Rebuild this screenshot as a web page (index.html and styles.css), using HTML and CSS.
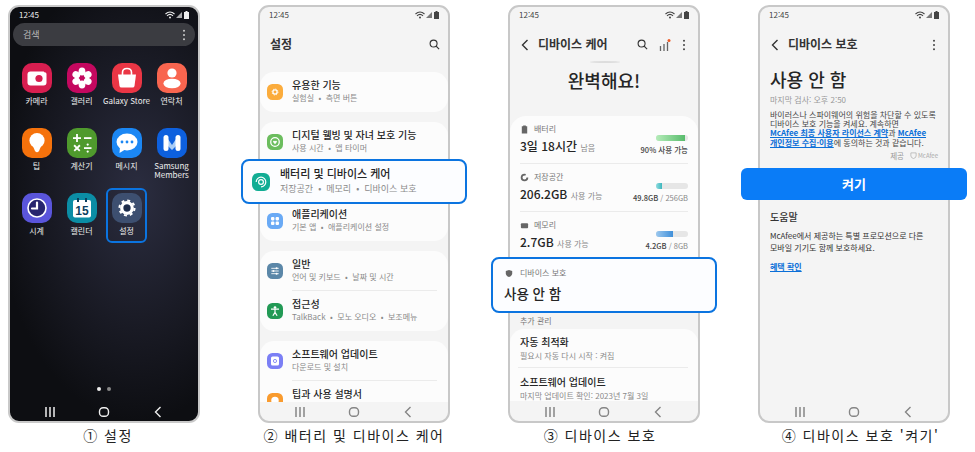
FILE: index.html
```html
<!DOCTYPE html>
<html lang="ko">
<head>
    <meta charset="UTF-8">
    <meta name="viewport" content="width=device-width, initial-scale=1.0">
    <title>디바이스 보호 켜기</title>
    <link rel="stylesheet" href="styles.css">
</head>
<body>
    <!-- 공용 아이콘 -->
    <svg class="sprite">
        <symbol id="i-wifi" viewBox="0 0 10 8"><path d="M0.5 3 Q5 -1 9.5 3 M2 4.8 Q5 2 8 4.8" fill="none" stroke="currentColor" stroke-width="1.1"/><circle cx="5" cy="6.6" r="1" fill="currentColor"/></symbol>
        <symbol id="i-signal" viewBox="0 0 7 8"><path d="M0 8 L7 1 V8 Z" fill="currentColor" opacity=".7"/></symbol>
        <symbol id="i-battery" viewBox="0 0 5 8"><path d="M1.5 0 H3.5 V1 H5 V8 H0 V1 H1.5 Z" fill="currentColor"/></symbol>
        <symbol id="i-recent" viewBox="0 0 14 14"><path d="M3 2 V12 M7 2 V12 M11 2 V12" fill="none" stroke="currentColor" stroke-width="1.5"/></symbol>
        <symbol id="i-home" viewBox="0 0 14 14"><rect x="2.5" y="2.7" width="9" height="8.6" rx="3.6" fill="none" stroke="currentColor" stroke-width="1.4"/></symbol>
        <symbol id="i-back" viewBox="0 0 14 14"><path d="M9.5 2 L4.5 7 L9.5 12" fill="none" stroke="currentColor" stroke-width="1.4"/></symbol>
        <symbol id="i-search" viewBox="0 0 12 12"><circle cx="5" cy="5" r="3.8" fill="none" stroke="currentColor" stroke-width="1.2"/><path d="M7.8 7.8 L11 11" stroke="currentColor" stroke-width="1.3"/></symbol>
        <symbol id="i-more" viewBox="0 0 4 12"><circle cx="2" cy="1.8" r="1" fill="currentColor"/><circle cx="2" cy="6" r="1" fill="currentColor"/><circle cx="2" cy="10.2" r="1" fill="currentColor"/></symbol>
        <symbol id="i-chevron" viewBox="0 0 8 12"><path d="M6.5 1 L1.5 6 L6.5 11" fill="none" stroke="currentColor" stroke-width="1.4"/></symbol>
        <symbol id="i-gear" viewBox="0 0 30 30"><circle cx="15" cy="15" r="6.6" fill="none" stroke="#fff" stroke-width="4"/><circle cx="15" cy="15" r="9.4" fill="none" stroke="#fff" stroke-width="2.6" stroke-dasharray="3.7 3.68"/></symbol>
    </svg>

    <main class="gallery">
        <!-- 1. 앱스 화면 -->
        <section class="step">
            <div class="phone phone-dark">
                <div class="status">
                    <span>12:45</span>
                    <span class="status-icons">
                        <svg class="ic-wifi"><use href="#i-wifi"/></svg>
                        <svg class="ic-signal"><use href="#i-signal"/></svg>
                        <svg class="ic-battery"><use href="#i-battery"/></svg>
                    </span>
                </div>
                <div class="search-bar">
                    <span>검색</span>
                    <svg class="ic-more"><use href="#i-more"/></svg>
                </div>
                <div class="app-grid">
                    <div class="app">
                        <svg class="app-icon" viewBox="0 0 30 30"><rect width="30" height="30" rx="10" fill="#d81e50"/><rect x="5.5" y="8.5" width="19" height="14" rx="3" fill="#fff"/><circle cx="17" cy="15.5" r="3.6" fill="#d81e50"/><circle cx="23.5" cy="8" r="1.6" fill="#d81e50"/></svg>
                        <span>카메라</span>
                    </div>
                    <div class="app">
                        <svg class="app-icon" viewBox="0 0 30 30"><rect width="30" height="30" rx="10" fill="#c4085f"/><g fill="#fff"><ellipse cx="15" cy="8.5" rx="3.4" ry="4"/><ellipse cx="15" cy="21.5" rx="3.4" ry="4"/><ellipse cx="9.3" cy="11.8" rx="3.4" ry="4" transform="rotate(-60 9.3 11.8)"/><ellipse cx="20.7" cy="11.8" rx="3.4" ry="4" transform="rotate(60 20.7 11.8)"/><ellipse cx="9.3" cy="18.2" rx="3.4" ry="4" transform="rotate(60 9.3 18.2)"/><ellipse cx="20.7" cy="18.2" rx="3.4" ry="4" transform="rotate(-60 20.7 18.2)"/></g><circle cx="15" cy="15" r="2" fill="#c4085f"/></svg>
                        <span>갤러리</span>
                    </div>
                    <div class="app">
                        <svg class="app-icon" viewBox="0 0 30 30"><rect width="30" height="30" rx="10" fill="#ea3645"/><path d="M6 11.5 H24 L22.5 23 Q22.3 24.5 20.5 24.5 H9.5 Q7.7 24.5 7.5 23 Z" fill="#fff"/><path d="M10.5 12 V9.5 Q10.5 5.5 15 5.5 Q19.5 5.5 19.5 9.5 V12" fill="none" stroke="#fff" stroke-width="1.6"/></svg>
                        <span>Galaxy Store</span>
                    </div>
                    <div class="app">
                        <svg class="app-icon" viewBox="0 0 30 30"><rect width="30" height="30" rx="10" fill="#f8654f"/><circle cx="15" cy="10" r="4.6" fill="#fff"/><ellipse cx="15" cy="20.5" rx="8.6" ry="4.8" fill="#fff"/></svg>
                        <span>연락처</span>
                    </div>
                    <div class="app">
                        <svg class="app-icon" viewBox="0 0 30 30"><rect width="30" height="30" rx="10" fill="#f5720c"/><circle cx="15" cy="12.5" r="7.6" fill="#fff"/><path d="M10.5 17 L13 23 Q15 25.5 17 23 L19.5 17 Z" fill="#fff"/></svg>
                        <span>팁</span>
                    </div>
                    <div class="app">
                        <svg class="app-icon" viewBox="0 0 30 30"><rect width="30" height="30" rx="10" fill="#4f9a2d"/><g fill="#fff"><rect x="6" y="9.2" width="8" height="1.8"/><rect x="9.1" y="6" width="1.8" height="8"/><rect x="17" y="9.2" width="7.5" height="1.8"/><rect x="6" y="19.2" width="8" height="1.8" transform="rotate(45 10 20)"/><rect x="6" y="19.2" width="8" height="1.8" transform="rotate(-45 10 20)"/><rect x="17" y="19.2" width="7.5" height="1.8"/><circle cx="20.7" cy="16.6" r="1.1"/><circle cx="20.7" cy="23.6" r="1.1"/></g></svg>
                        <span>계산기</span>
                    </div>
                    <div class="app">
                        <svg class="app-icon" viewBox="0 0 30 30"><rect width="30" height="30" rx="10" fill="#1b87f4"/><ellipse cx="15" cy="14" rx="10.5" ry="8.5" fill="#fff"/><path d="M8 19 L7.5 25 L14 21 Z" fill="#fff"/><g fill="#1b87f4"><circle cx="10" cy="14" r="1.4"/><circle cx="15" cy="14" r="1.4"/><circle cx="20" cy="14" r="1.4"/></g></svg>
                        <span>메시지</span>
                    </div>
                    <div class="app">
                        <svg class="app-icon" viewBox="0 0 30 30"><rect width="30" height="30" rx="10" fill="#0d60de"/><path d="M9 8 L15 17 L21 8 V16 L15 22 L9 16 Z" fill="#a9cdf6"/><rect x="6.5" y="7" width="5" height="16" rx="2.5" fill="#fff"/><rect x="18.5" y="7" width="5" height="16" rx="2.5" fill="#fff"/></svg>
                        <span>Samsung<br>Members</span>
                    </div>
                    <div class="app">
                        <svg class="app-icon" viewBox="0 0 30 30"><rect width="30" height="30" rx="10" fill="#5a55db"/><circle cx="15" cy="15" r="9" fill="#27256e" stroke="#fff" stroke-width="1.6"/><path d="M15 9.5 V15.5 H10" fill="none" stroke="#fff" stroke-width="2.2" stroke-linecap="round"/></svg>
                        <span>시계</span>
                    </div>
                    <div class="app">
                        <svg class="app-icon" viewBox="0 0 30 30"><rect width="30" height="30" rx="10" fill="#0b8da5"/><rect x="6" y="7" width="18" height="17.5" rx="2" fill="#fff"/><rect x="10" y="5" width="2" height="4" fill="#0d3f5e"/><rect x="18" y="5" width="2" height="4" fill="#0d3f5e"/><text class="cal-day" x="15" y="21.5" text-anchor="middle">15</text></svg>
                        <span>캘린더</span>
                    </div>
                    <div class="app app-active">
                        <svg class="app-icon" viewBox="0 0 30 30"><rect width="30" height="30" rx="10" fill="#3d4f70"/><use href="#i-gear" x="3" y="3" width="24" height="24"/><circle cx="15" cy="15" r="3.2" fill="#1d2c4a"/></svg>
                        <span>설정</span>
                    </div>
                </div>
                <div class="page-dots"><i></i><i></i></div>
                <div class="nav">
                    <svg><use href="#i-recent"/></svg>
                    <svg><use href="#i-home"/></svg>
                    <svg><use href="#i-back"/></svg>
                </div>
            </div>
            <p class="caption cap-1">① 설정</p>
        </section>

        <!-- 2. 설정 -->
        <section class="step">
            <div class="phone">
                <div class="status">
                    <span>12:45</span>
                    <span class="status-icons">
                        <svg class="ic-wifi"><use href="#i-wifi"/></svg>
                        <svg class="ic-signal"><use href="#i-signal"/></svg>
                        <svg class="ic-battery"><use href="#i-battery"/></svg>
                    </span>
                </div>
                <div class="header">
                    <h2 class="settings-title">설정</h2>
                    <svg class="ic-search"><use href="#i-search"/></svg>
                </div>
                <div class="card">
                    <div class="row">
                        <svg class="row-icon" viewBox="0 0 30 30"><rect width="30" height="30" rx="10" fill="#fbac3c"/><use href="#i-gear" x="6" y="6" width="18" height="18"/></svg>
                        <div><p class="row-title">유용한 기능</p><p class="row-sub">실험실 &nbsp;•&nbsp; 측면 버튼</p></div>
                    </div>
                </div>
                <div class="card">
                    <div class="row">
                        <svg class="row-icon" viewBox="0 0 30 30"><rect width="30" height="30" rx="10" fill="#6cbd5e"/><circle cx="15" cy="15" r="8" fill="none" stroke="#fff" stroke-width="2.4"/><path d="M15 19 L11.5 15 Q11 12 13.5 12.5 L15 13.5 L16.5 12.5 Q19 12 18.5 15 Z" fill="#fff"/></svg>
                        <div><p class="row-title">디지털 웰빙 및 자녀 보호 기능</p><p class="row-sub">사용 시간 &nbsp;•&nbsp; 앱 타이머</p></div>
                    </div>
                    <div class="callout callout-row">
                        <svg class="callout-icon" viewBox="0 0 30 30"><rect width="30" height="30" rx="10" fill="#12ad94"/><path d="M7 15 A8 8 0 1 1 15 23" fill="none" stroke="#fff" stroke-width="2"/><circle cx="15" cy="15" r="4" fill="none" stroke="#fff" stroke-width="2"/></svg>
                        <div class="callout-text"><p class="callout-title">배터리 및 디바이스 케어</p><p class="callout-sub">저장공간 &nbsp;•&nbsp; 메모리 &nbsp;•&nbsp; 디바이스 보호</p></div>
                    </div>
                    <div class="row">
                        <svg class="row-icon" viewBox="0 0 30 30"><rect width="30" height="30" rx="10" fill="#6aaaf5"/><g fill="#fff"><rect x="7.5" y="7.5" width="6.4" height="6.4" rx="2"/><rect x="16.1" y="7.5" width="6.4" height="6.4" rx="2"/><rect x="7.5" y="16.1" width="6.4" height="6.4" rx="2"/><rect x="16.1" y="16.1" width="6.4" height="6.4" rx="2"/></g></svg>
                        <div><p class="row-title">애플리케이션</p><p class="row-sub">기본 앱 &nbsp;•&nbsp; 애플리케이션 설정</p></div>
                    </div>
                </div>
                <div class="card">
                    <div class="row">
                        <svg class="row-icon" viewBox="0 0 30 30"><rect width="30" height="30" rx="10" fill="#5b87a8"/><path d="M8 10 H22 M8 15 H22 M8 20 H22" stroke="#fff" stroke-width="1.6"/><g fill="#fff"><circle cx="18" cy="10" r="1.9"/><circle cx="12" cy="15" r="1.9"/><circle cx="18" cy="20" r="1.9"/></g></svg>
                        <div><p class="row-title">일반</p><p class="row-sub">언어 및 키보드 &nbsp;•&nbsp; 날짜 및 시간</p></div>
                    </div>
                    <hr class="divider">
                    <div class="row">
                        <svg class="row-icon" viewBox="0 0 30 30"><rect width="30" height="30" rx="10" fill="#229a55"/><circle cx="15" cy="8.5" r="2.5" fill="#fff"/><path d="M7.5 11.5 H22.5 M15 11.5 V18 M15 17.5 L11 24 M15 17.5 L19 24" fill="none" stroke="#fff" stroke-width="2.2"/></svg>
                        <div><p class="row-title">접근성</p><p class="row-sub">TalkBack &nbsp;•&nbsp; 모노 오디오 &nbsp;•&nbsp; 보조메뉴</p></div>
                    </div>
                </div>
                <div class="card card-clipped">
                    <div class="row">
                        <svg class="row-icon" viewBox="0 0 30 30"><rect width="30" height="30" rx="10" fill="#7b7ff5"/><rect x="7.5" y="6.5" width="15" height="17" rx="3" fill="#fff"/><circle cx="15" cy="15" r="3" fill="none" stroke="#7b7ff5" stroke-width="1.6"/></svg>
                        <div><p class="row-title">소프트웨어 업데이트</p><p class="row-sub">다운로드 및 설치</p></div>
                    </div>
                    <hr class="divider">
                    <div class="row">
                        <svg class="row-icon" viewBox="0 0 30 30"><rect width="30" height="30" rx="10" fill="#f99b2e"/><circle cx="15" cy="14" r="7" fill="#fff"/></svg>
                        <div><p class="row-title">팁과 사용 설명서</p></div>
                    </div>
                </div>
                <div class="nav">
                    <svg><use href="#i-recent"/></svg>
                    <svg><use href="#i-home"/></svg>
                    <svg><use href="#i-back"/></svg>
                </div>
            </div>
            <p class="caption">② 배터리 및 디바이스 케어</p>
        </section>

        <!-- 3. 디바이스 케어 -->
        <section class="step">
            <div class="phone">
                <div class="status">
                    <span>12:45</span>
                    <span class="status-icons">
                        <svg class="ic-wifi"><use href="#i-wifi"/></svg>
                        <svg class="ic-signal"><use href="#i-signal"/></svg>
                        <svg class="ic-battery"><use href="#i-battery"/></svg>
                    </span>
                </div>
                <div class="header">
                    <svg class="ic-chevron"><use href="#i-chevron"/></svg>
                    <h2 class="header-title">디바이스 케어</h2>
                    <svg class="ic-search"><use href="#i-search"/></svg>
                    <svg class="ic-bars" viewBox="0 0 12 12"><path d="M1.5 12 V7 M5 12 V5 M8.5 12 V3" fill="none" stroke="#666" stroke-width="1.3"/><circle cx="10" cy="1.6" r="1.5" fill="#ef5a24"/></svg>
                    <svg class="ic-more"><use href="#i-more"/></svg>
                </div>
                <div class="care-hero">
                    <span class="hero-arc"></span>
                    <p class="hero-title">완벽해요!</p>
                </div>
                <div class="care-card">
                    <div class="stat">
                        <div>
                            <p class="stat-label"><svg class="stat-icon" viewBox="0 0 10 10"><path d="M3.5 0.5 H6.5 V1.5 H8 V9.5 H2 V1.5 H3.5 Z" fill="#666"/></svg>배터리</p>
                            <p class="stat-value">3일 18시간 <small>남음</small></p>
                        </div>
                        <div class="stat-side">
                            <div class="bar"><div class="bar-fill fill-green" style="width: 90%"></div></div>
                            <p class="bar-note"><b>90% 사용 가능</b></p>
                        </div>
                    </div>
                    <div class="stat">
                        <div>
                            <p class="stat-label"><svg class="stat-icon" viewBox="0 0 10 10"><circle cx="5" cy="5" r="3.2" fill="none" stroke="#666" stroke-width="2" stroke-dasharray="16 4"/></svg>저장공간</p>
                            <p class="stat-value">206.2GB <small>사용 가능</small></p>
                        </div>
                        <div class="stat-side">
                            <div class="bar"><div class="bar-fill fill-teal" style="width: 20%"></div></div>
                            <p class="bar-note"><b>49.8GB</b> / 256GB</p>
                        </div>
                    </div>
                    <div class="stat stat-last">
                        <div>
                            <p class="stat-label"><svg class="stat-icon" viewBox="0 0 10 10"><rect x="1" y="2.5" width="8" height="5.5" rx="1" fill="#666"/></svg>메모리</p>
                            <p class="stat-value">2.7GB <small>사용 가능</small></p>
                        </div>
                        <div class="stat-side">
                            <div class="bar"><div class="bar-fill fill-blue" style="width: 52%"></div></div>
                            <p class="bar-note"><b>4.2GB</b> / 8GB</p>
                        </div>
                    </div>
                </div>
                <div class="callout callout-protect">
                    <p class="protect-label"><svg class="shield" viewBox="0 0 10 10"><path d="M5 0.5 L9 2 V5 Q9 8 5 9.5 Q1 8 1 5 V2 Z" fill="#666"/></svg>디바이스 보호</p>
                    <p class="protect-value">사용 안 함</p>
                </div>
                <p class="section-label">추가 관리</p>
                <div class="card care-more">
                    <p class="row-title">자동 최적화</p>
                    <p class="row-sub">필요시 자동 다시 시작 : 켜짐</p>
                    <hr class="divider divider-full">
                    <p class="row-title">소프트웨어 업데이트</p>
                    <p class="row-sub">마지막 업데이트 확인: 2023년 7월 3일</p>
                </div>
                <div class="nav">
                    <svg><use href="#i-recent"/></svg>
                    <svg><use href="#i-home"/></svg>
                    <svg><use href="#i-back"/></svg>
                </div>
            </div>
            <p class="caption cap-3">③ 디바이스 보호</p>
        </section>

        <!-- 4. 디바이스 보호 -->
        <section class="step">
            <div class="phone">
                <div class="status">
                    <span>12:45</span>
                    <span class="status-icons">
                        <svg class="ic-wifi"><use href="#i-wifi"/></svg>
                        <svg class="ic-signal"><use href="#i-signal"/></svg>
                        <svg class="ic-battery"><use href="#i-battery"/></svg>
                    </span>
                </div>
                <div class="header">
                    <svg class="ic-chevron"><use href="#i-chevron"/></svg>
                    <h2 class="header-title">디바이스 보호</h2>
                    <svg class="ic-more"><use href="#i-more"/></svg>
                </div>
                <div class="protect-page">
                    <p class="protect-title">사용 안 함</p>
                    <p class="meta">마지막 검사: 오후 2:50</p>
                    <p class="para">바이러스나 스파이웨어의 위험을 차단할 수 있도록<br>디바이스 보호 기능을 켜세요. 계속하면<br><a class="link">McAfee 최종 사용자 라이선스 계약</a>과 <a class="link">McAfee<br>개인정보 수집·이용</a>에 동의하는 것과 같습니다.</p>
                    <p class="provider">제공 <svg class="mcafee-mark" viewBox="0 0 8 8"><path d="M1 1 H7 V4.5 Q7 6.5 4 7.5 Q1 6.5 1 4.5 Z" fill="none" stroke="#aaa" stroke-width=".8"/></svg><small>McAfee</small></p>
                    <div class="turn-on">켜기</div>
                    <p class="help-title">도움말</p>
                    <p class="help-text">McAfee에서 제공하는 특별 프로모션으로 다른<br>모바일 기기도 함께 보호하세요.</p>
                    <a class="link benefit">혜택 확인</a>
                </div>
                <div class="nav">
                    <svg><use href="#i-recent"/></svg>
                    <svg><use href="#i-home"/></svg>
                    <svg><use href="#i-back"/></svg>
                </div>
            </div>
            <p class="caption cap-4">④ 디바이스 보호 '켜기'</p>
        </section>
    </main>
</body>
</html>
```

FILE: styles.css
```css
/* 전체 */
* {
    box-sizing: border-box;
}

body {
    margin: 0;
    width: 975px;
    height: 452px;
    overflow: hidden;
    background: #fff;
    color: #252525;
    font-family: "Noto Sans CJK KR", "Noto Sans", sans-serif;
}

p, h2 {
    margin: 0;
    font-weight: 400;
}

svg {
    display: block;
    flex: none;
}

.sprite {
    display: none;
}

.gallery {
    display: flex;
    gap: 58px;
    padding: 5px 0 0 8px;
}

.step {
    width: 192px;
}

.caption {
    margin-top: 4px;
    font-size: 14px;
    line-height: 16px;
    letter-spacing: 1.5px;
    text-align: center;
    white-space: nowrap;
    color: #222;
}

.cap-1 { padding-left: 8px; }
.cap-3 { padding-right: 8px; }
.cap-4 { padding-left: 13px; }

/* 폰 프레임 */
.phone {
    display: flex;
    flex-direction: column;
    height: 418px;
    border: 2px solid #c8c8c8;
    border-radius: 11px;
    background: #f4f4f4;
}

.phone-dark {
    color: #eee;
    border-color: #c9c9c9;
    background: radial-gradient(ellipse 75% 55% at 68% 45%, #2b2d40 0%, #191a24 60%, #0d0e12 100%);
}

.status {
    display: flex;
    justify-content: space-between;
    align-items: center;
    height: 15px;
    padding: 0 9px;
    font-size: 8px;
    color: #444;
}

.phone-dark .status {
    color: #eee;
}

.status-icons {
    display: flex;
    align-items: center;
    gap: 1px;
}

.ic-wifi { width: 10px; height: 8px; }
.ic-signal { width: 6px; height: 7px; }
.ic-battery { width: 5px; height: 8px; margin-left: 1px; }

.nav {
    display: flex;
    justify-content: center;
    align-items: center;
    gap: 40px;
    height: 19px;
    margin-top: auto;
    color: #858585;
}

.phone-dark .nav {
    color: #eee;
}

.nav svg {
    width: 14px;
    height: 14px;
}

/* 앱스 화면 */
.search-bar {
    display: flex;
    justify-content: space-between;
    align-items: center;
    height: 23px;
    margin: 1px 3px 0;
    padding: 0 9px 0 10px;
    border-radius: 12px;
    background: #3b3c41;
    font-size: 9px;
    color: #bbb;
}

.ic-more {
    width: 4px;
    height: 12px;
    color: #444;
}

.search-bar .ic-more {
    color: #ccc;
}

.app-grid {
    display: grid;
    grid-template-columns: repeat(4, 45px);
    grid-auto-rows: 65px;
    padding: 17px 0 0 4px;
}

.app {
    position: relative;
    display: flex;
    flex-direction: column;
    align-items: center;
    font-size: 8px;
    line-height: 9px;
    text-align: center;
    white-space: nowrap;
}

.app-icon {
    width: 30px;
    height: 30px;
    margin-bottom: 3px;
}

.app-active::after {
    content: "";
    position: absolute;
    top: -5px;
    left: 2px;
    right: 2px;
    height: 51px;
    border: 2px solid #0b74e0;
    border-radius: 6px;
}

.cal-day {
    font-size: 12px;
    font-weight: 700;
    font-family: "Liberation Sans", sans-serif;
    fill: #0d3f5e;
}

.page-dots {
    display: flex;
    justify-content: center;
    gap: 6px;
    margin-top: auto;
    margin-bottom: 11px;
}

.page-dots i {
    width: 4px;
    height: 4px;
    border-radius: 50%;
    background: #eee;
}

.page-dots i + i {
    background: #888;
}

.page-dots + .nav {
    margin-top: 0;
}

/* 헤더 */
.header {
    display: flex;
    align-items: center;
    gap: 11px;
    height: 45px;
    padding: 0 11px;
    color: #333;
}

.settings-title {
    flex: 1;
    margin: 0 0 2px -1px;
    font-size: 12px;
    font-weight: 700;
}

.settings-title + .ic-search {
    margin-right: -3px;
}

.header-title {
    flex: 1;
    margin: 0 0 2px -2px;
    font-size: 12px;
    font-weight: 700;
}

.ic-search {
    width: 11px;
    height: 11px;
    color: #333;
}

.ic-chevron {
    width: 8px;
    height: 12px;
}

.ic-bars {
    width: 12px;
    height: 12px;
    margin-left: 0;
}

.header .ic-more {
    margin-right: 1px;
}

/* 카드와 행 */
.card {
    margin-top: 5px;
    border-radius: 14px;
    background: #fcfcfc;
}

.card + .card {
    margin-top: 10px;
}

.card-clipped {
    height: 61px;
    overflow: hidden;
    border-radius: 14px 14px 0 0;
}

.row {
    display: flex;
    align-items: flex-start;
    gap: 9px;
    height: 40px;
    padding: 7px 0 0 7px;
}

.row-icon {
    width: 16px;
    height: 16px;
    margin-top: 5px;
}

.row-title {
    font-size: 10px;
    font-weight: 500;
    line-height: 12px;
    white-space: nowrap;
}

.row-sub {
    margin-top: 1px;
    font-size: 8px;
    line-height: 12px;
    color: #8a8a8a;
    white-space: nowrap;
}

.divider {
    height: 1px;
    margin: -1px 11px 0 32px;
    border: 0;
    background: #ebebeb;
}

/* 파란 강조 박스 */
.callout {
    position: relative;
    margin: -3px -19px;
    border: 2px solid #0b74e0;
    border-radius: 8px;
    background: #fcfdff;
}

.callout-row {
    display: flex;
    align-items: center;
    gap: 10px;
    height: 45px;
    padding-left: 9px;
}

.callout-icon {
    width: 18px;
    height: 18px;
}

.callout-text {
    margin-bottom: 1px;
}

.callout-title {
    font-size: 11px;
    font-weight: 500;
    line-height: 13px;
    white-space: nowrap;
}

.callout-sub {
    margin-top: 3px;
    font-size: 9px;
    line-height: 12px;
    color: #8a8a8a;
    white-space: nowrap;
}

/* 디바이스 케어 */
.care-hero {
    position: relative;
    height: 49px;
    padding-top: 2px;
    text-align: center;
}

.hero-arc {
    position: absolute;
    top: -6px;
    left: 80px;
    width: 30px;
    height: 2px;
    border-radius: 50%;
    background: #ddd;
}

.hero-title {
    font-size: 18px;
    font-weight: 500;
    line-height: 22px;
}

.care-card {
    padding: 0 10px;
    border-radius: 16px 16px 0 0;
    background: #fcfcfc;
}

.stat {
    display: flex;
    justify-content: space-between;
    height: 48px;
    padding-top: 7px;
    border-bottom: 1px solid #ebebeb;
}

.stat-last {
    height: 47px;
    border-bottom: 0;
}

.stat-label {
    display: flex;
    align-items: center;
    gap: 5px;
    font-size: 8px;
    line-height: 12px;
    color: #777;
}

.stat-icon {
    width: 9px;
    height: 9px;
}

.stat-value {
    margin-top: 2px;
    font-size: 12px;
    font-weight: 500;
    line-height: 18px;
    white-space: nowrap;
}

.stat-value small {
    font-size: 8px;
    font-weight: 400;
    color: #8a8a8a;
}

.stat-side {
    display: flex;
    flex-direction: column;
    align-items: flex-end;
    padding-top: 12px;
}

.bar {
    width: 32px;
    height: 6px;
    overflow: hidden;
    border-radius: 3px;
    background: #e6e6e6;
}

.bar-fill {
    height: 100%;
}

.fill-green { background: linear-gradient(90deg, #b5ecb9, #58bc6c); }
.fill-teal { background: linear-gradient(90deg, #8fdde0, #3db6bd); }
.fill-blue { background: linear-gradient(90deg, #9cc8ee, #3f8fd9); }

.bar-note {
    margin-top: 3px;
    font-size: 7.5px;
    line-height: 12px;
    color: #888;
    white-space: nowrap;
}

.bar-note b {
    font-weight: 500;
    color: #444;
}

.callout-protect {
    height: 56px;
    margin: -2px -19px 0;
    padding: 8px 0 0 11px;
}

.protect-label {
    display: flex;
    align-items: center;
    gap: 7px;
    margin-left: 1px;
    font-size: 8px;
    line-height: 12px;
    color: #777;
}

.shield {
    width: 8px;
    height: 9px;
}

.protect-value {
    margin-top: 5px;
    font-size: 13.5px;
    font-weight: 500;
    line-height: 18px;
}

.section-label {
    margin-top: 2px;
    padding-left: 10px;
    font-size: 8px;
    line-height: 12px;
    color: #777;
}

.card.care-more {
    height: 72px;
    margin-top: 2px;
    padding: 7px 10px 0;
    overflow: hidden;
    border-radius: 14px 14px 0 0;
}

.care-more .row-sub {
    margin-top: 2px;
}

.divider-full {
    margin: 5px 0 8px -2px;
}

/* 디바이스 보호 */
.protect-page {
    padding: 1px 10px 0;
}

.protect-title {
    font-size: 18px;
    font-weight: 500;
    line-height: 22px;
}

.meta {
    margin-top: 5px;
    font-size: 8px;
    line-height: 10px;
    color: #999;
}

.para {
    margin-top: 5px;
    font-size: 8px;
    line-height: 9.2px;
    color: #444;
    white-space: nowrap;
}

.link {
    font-weight: 700;
    color: #0a6fd8;
    text-decoration: underline;
}

.provider {
    display: flex;
    justify-content: flex-end;
    align-items: center;
    gap: 3px;
    margin-top: 4px;
    font-size: 7.5px;
    line-height: 10px;
    color: #999;
}

.provider small {
    margin-left: -2px;
    font-size: 6px;
    color: #aaa;
}

.mcafee-mark {
    width: 7px;
    height: 7px;
    margin-left: 3px;
}

.turn-on {
    position: relative;
    height: 32px;
    margin: 7px -29px 0;
    border-radius: 6px;
    background: #0a7cf7;
    color: #fff;
    font-size: 13px;
    font-weight: 700;
    line-height: 32px;
    text-align: center;
}

.help-title {
    margin-top: 11px;
    font-size: 10px;
    font-weight: 500;
    line-height: 12px;
    color: #333;
}

.help-text {
    margin-top: 7px;
    font-size: 8px;
    line-height: 12.5px;
    color: #333;
    white-space: nowrap;
}

.benefit {
    display: block;
    margin-top: 6px;
    font-size: 8px;
    line-height: 12px;
}
```
